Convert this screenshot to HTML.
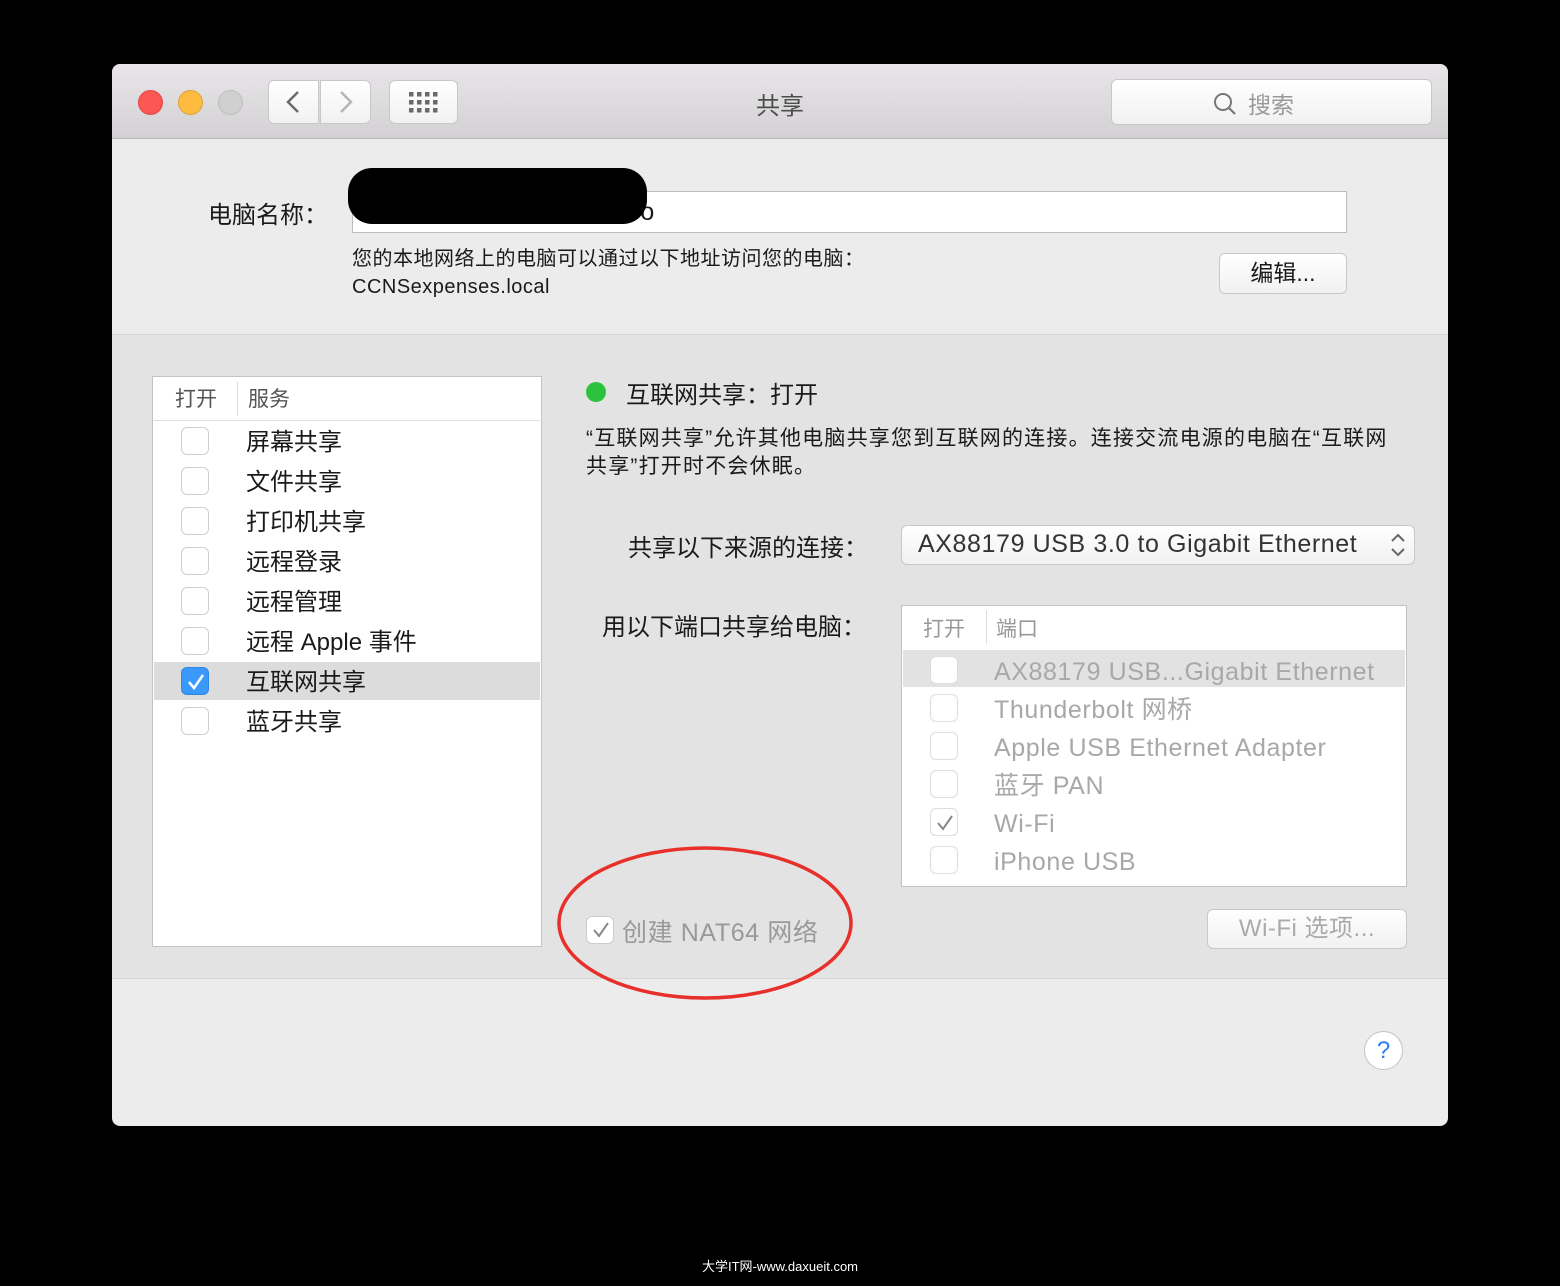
<!DOCTYPE html>
<html><head><meta charset="utf-8"><style>
*{margin:0;padding:0;box-sizing:border-box}
body{width:1560px;height:1286px;background:#000;position:relative;overflow:hidden;font-family:"Liberation Sans","Noto Sans CJK SC",sans-serif;color:#1a1a1a}
.a{position:absolute}
.win{left:112px;top:64px;width:1336px;height:1062px;background:#ececec;border-radius:8px;overflow:hidden}
.tb{left:0;top:0;width:1336px;height:75px;background:linear-gradient(#e8e6e8,#d3d1d3);border-bottom:1px solid #b9b9b9}
.dot{width:25px;height:25px;border-radius:50%;top:26px}
.btn{background:linear-gradient(#fff,#f1f1f1);border:1px solid #c8c8c8;border-radius:6px}
.cb{width:28px;height:28px;border:1.5px solid #cfcfcf;border-radius:6px;background:#fff}
.lbl{font-size:24px}
.g{color:#a8a8a8}
</style></head><body>
<div class="a win">
 <div class="a tb">
  <div class="a dot" style="left:26px;background:#fc5753;border:1px solid #df4744"></div>
  <div class="a dot" style="left:66px;background:#fdbc40;border:1px solid #dea236"></div>
  <div class="a dot" style="left:106px;background:#d0d0d0;border:1px solid #bdbdbd"></div>
  <div class="a btn" style="left:156px;top:16px;width:51px;height:44px;border-radius:6px 0 0 6px"></div>
  <div class="a btn" style="left:208px;top:16px;width:51px;height:44px;border-radius:0 6px 6px 0"></div>
  <svg class="a" style="left:156px;top:16px" width="104" height="44"><path d="M30 12 L20 22 L30 32" stroke="#6b6b6b" stroke-width="2.5" fill="none"/><path d="M73 12 L83 22 L73 32" stroke="#b5b5b5" stroke-width="2.5" fill="none"/></svg>
  <div class="a btn" style="left:277px;top:16px;width:69px;height:44px"></div>
  <svg class="a" style="left:297px;top:28px" width="30" height="22" fill="#6a6a6a"><g>
   <rect x="0" y="0" width="4.5" height="4.5"/><rect x="8" y="0" width="4.5" height="4.5"/><rect x="16" y="0" width="4.5" height="4.5"/><rect x="24" y="0" width="4.5" height="4.5"/>
   <rect x="0" y="8" width="4.5" height="4.5"/><rect x="8" y="8" width="4.5" height="4.5"/><rect x="16" y="8" width="4.5" height="4.5"/><rect x="24" y="8" width="4.5" height="4.5"/>
   <rect x="0" y="16" width="4.5" height="4.5"/><rect x="8" y="16" width="4.5" height="4.5"/><rect x="16" y="16" width="4.5" height="4.5"/><rect x="24" y="16" width="4.5" height="4.5"/></g></svg>
  <div class="a" style="left:0;width:1336px;top:22px;text-align:center;font-size:24px;color:#4d4d4d">共享</div>
  <div class="a btn" style="left:999px;top:15px;width:321px;height:46px"></div>
  <svg class="a" style="left:1100px;top:27px" width="26" height="26"><circle cx="11" cy="11" r="8" stroke="#777" stroke-width="2" fill="none"/><path d="M17 17 L23 23" stroke="#777" stroke-width="2.2"/></svg>
  <div class="a" style="left:1136px;top:22px;font-size:23px;color:#999">搜索</div>
 </div>
 <div class="a lbl" style="left:96px;top:131px">电脑名称：</div>
 <div class="a" style="left:240px;top:127px;width:995px;height:42px;background:#fff;border:1px solid #bdbdbd"></div>
 <div class="a" style="left:520px;top:134px;font-size:25px">ro</div>
 <div class="a" style="left:236px;top:104px;width:299px;height:56px;background:#000;border-radius:24px"></div>
 <div class="a" style="left:240px;top:181px;font-size:20px;line-height:28px;letter-spacing:0.5px">您的本地网络上的电脑可以通过以下地址访问您的电脑：<br>CCNSexpenses.local</div>
 <div class="a btn" style="left:1107px;top:189px;width:128px;height:41px;text-align:center;font-size:23px;line-height:38px">编辑...</div>
 <div class="a" style="left:0;top:270px;width:1336px;height:645px;background:#e3e3e3;border-top:1px solid #d6d6d6;border-bottom:1px solid #d6d6d6"></div>
 <div class="a" style="left:40px;top:312px;width:390px;height:571px;background:#fff;border:1.5px solid #c3c3c3"></div>
 <div class="a" style="left:42px;top:314px;width:386px;height:43px;border-bottom:1px solid #ddd"></div>
 <div class="a" style="left:125px;top:318px;width:1px;height:34px;background:#ddd"></div>
 <div class="a" style="left:63px;top:319px;font-size:21px;color:#555">打开</div>
 <div class="a" style="left:136px;top:319px;font-size:21px;color:#555">服务</div>
 <div class="a" style="left:42px;top:598px;width:386px;height:38px;background:#dcdcdc"></div>
 <div class="a" style="left:69px;top:363px"><div class="cb"></div><div class="cb" style="margin-top:12px"></div><div class="cb" style="margin-top:12px"></div><div class="cb" style="margin-top:12px"></div><div class="cb" style="margin-top:12px"></div><div class="cb" style="margin-top:12px"></div><div class="cb" style="margin-top:12px;background:#3b99fc;border-color:#2f86e6"></div><div class="cb" style="margin-top:12px"></div></div>
 <svg class="a" style="left:73px;top:607px" width="22" height="22"><path d="M4 11 L9 17 L18 4" stroke="#fff" stroke-width="2.5" fill="none"/></svg>
 <div class="a lbl" style="left:134px;top:359px;line-height:40px">屏幕共享<br>文件共享<br>打印机共享<br>远程登录<br>远程管理<br>远程 Apple 事件<br>互联网共享<br>蓝牙共享</div>
 <div class="a" style="left:474px;top:318px;width:20px;height:20px;border-radius:50%;background:#2dc23e"></div>
 <div class="a lbl" style="left:514px;top:311px">互联网共享：打开</div>
 <div class="a" style="left:474px;top:361px;font-size:21px;line-height:28px;width:808px;letter-spacing:1.2px">“互联网共享”允许其他电脑共享您到互联网的连接。连接交流电源的电脑在“互联网共享”打开时不会休眠。</div>
 <div class="a lbl" style="left:516px;top:464px">共享以下来源的连接：</div>
 <div class="a btn" style="left:789px;top:461px;width:514px;height:40px"></div>
 <div class="a" style="left:806px;top:466px;font-size:25px;color:#333;letter-spacing:0.6px">AX88179 USB 3.0 to Gigabit Ethernet</div>
 <svg class="a" style="left:1276px;top:466px" width="20" height="30"><path d="M4 11 L10 5 L16 11 M4 19 L10 25 L16 19" stroke="#666" stroke-width="2" fill="none"/></svg>
 <div class="a lbl" style="left:490px;top:543px">用以下端口共享给电脑：</div>
 <div class="a" style="left:789px;top:541px;width:506px;height:282px;background:#fff;border:1.5px solid #c3c3c3"></div>
 <div class="a" style="left:874px;top:546px;width:1px;height:34px;background:#ddd"></div>
 <div class="a" style="left:811px;top:549px;font-size:21px;color:#999">打开</div>
 <div class="a" style="left:884px;top:549px;font-size:21px;color:#999">端口</div>
 <div class="a" style="left:791px;top:586px;width:502px;height:37px;background:#e2e2e2"></div>
 <div class="a" style="left:818px;top:592px"><div class="cb" style="border-color:#ddd"></div><div class="cb" style="margin-top:10px;border-color:#ddd"></div><div class="cb" style="margin-top:10px;border-color:#ddd"></div><div class="cb" style="margin-top:10px;border-color:#ddd"></div><div class="cb" style="margin-top:10px;border-color:#ddd"></div><div class="cb" style="margin-top:10px;border-color:#ddd"></div></div>
 <svg class="a" style="left:822px;top:748px" width="22" height="22"><path d="M4 11 L9 17 L18 4" stroke="#888" stroke-width="2" fill="none"/></svg>
 <div class="a g" style="left:882px;top:589px;font-size:25px;line-height:38px;letter-spacing:0.6px">AX88179 USB...Gigabit Ethernet<br>Thunderbolt 网桥<br>Apple USB Ethernet Adapter<br>蓝牙 PAN<br>Wi-Fi<br>iPhone USB</div>
 <div class="a cb" style="left:474px;top:852px;border-color:#ccc"></div>
 <svg class="a" style="left:478px;top:855px" width="22" height="22"><path d="M4 11 L9 17 L18 4" stroke="#888" stroke-width="2" fill="none"/></svg>
 <div class="a g" style="left:510px;top:849px;font-size:25px;color:#999;letter-spacing:0.6px">创建 NAT64 网络</div>
 <svg class="a" style="left:444px;top:780px" width="300" height="160"><ellipse cx="149" cy="79" rx="146" ry="75" stroke="#e8302a" stroke-width="3.5" fill="none"/></svg>
 <div class="a btn" style="left:1095px;top:845px;width:200px;height:40px;text-align:center;font-size:24px;line-height:38px;color:#aaa;letter-spacing:0.5px">Wi-Fi 选项...</div>
 <div class="a" style="left:1252px;top:967px;width:39px;height:39px;border-radius:50%;background:#fff;border:1px solid #c3c3c3;text-align:center;font-size:24px;line-height:37px;color:#2e7cf6">?</div>
</div>
<div class="a" style="left:0;width:1560px;top:1256px;text-align:center;font-size:13px;color:#fff">大学IT网-www.daxueit.com</div>
</body></html>
